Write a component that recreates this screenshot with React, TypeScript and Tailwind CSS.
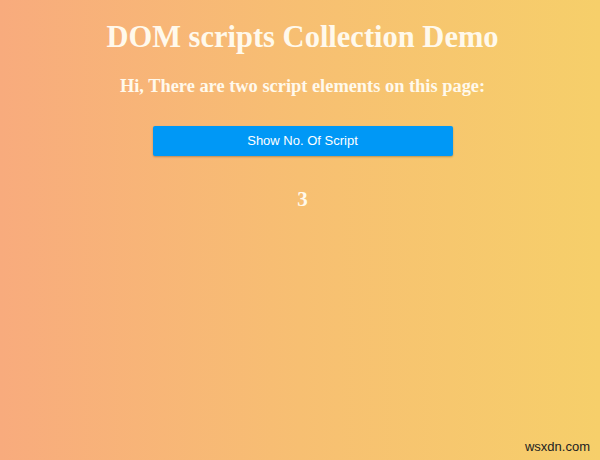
export default function App() {
  return (
    <div className="relative w-[600px] h-[460px] overflow-hidden bg-[linear-gradient(to_right,#f8ab7d_0%,#f7bf72_50%,#f6cf6a_100%)] font-['Liberation_Serif',serif] text-[#fff9ec]">
      <div className="flex flex-col items-center pl-[5px]">
        <h1 className="mt-[19px] text-[30.5px] leading-[36px] font-bold">DOM scripts Collection Demo</h1>
        <h3 className="mt-[20px] text-[18.4px] leading-[22px] font-bold">Hi, There are two script elements on this page:</h3>
        <button className="mt-[29px] w-[300px] h-[30px] bg-[#0098f6] rounded-[2px] shadow-[0_1px_2px_rgba(0,0,0,0.25)] text-white text-[13px] font-['Liberation_Sans',sans-serif]">
          Show No. Of Script
        </button>
        <p className="mt-[31px] text-[21px] leading-[24px] font-bold">3</p>
      </div>
      <div className="absolute right-[10px] bottom-[4px] text-[13px] text-[#222] font-['Liberation_Sans',sans-serif]">wsxdn.com</div>
    </div>
  )
}
